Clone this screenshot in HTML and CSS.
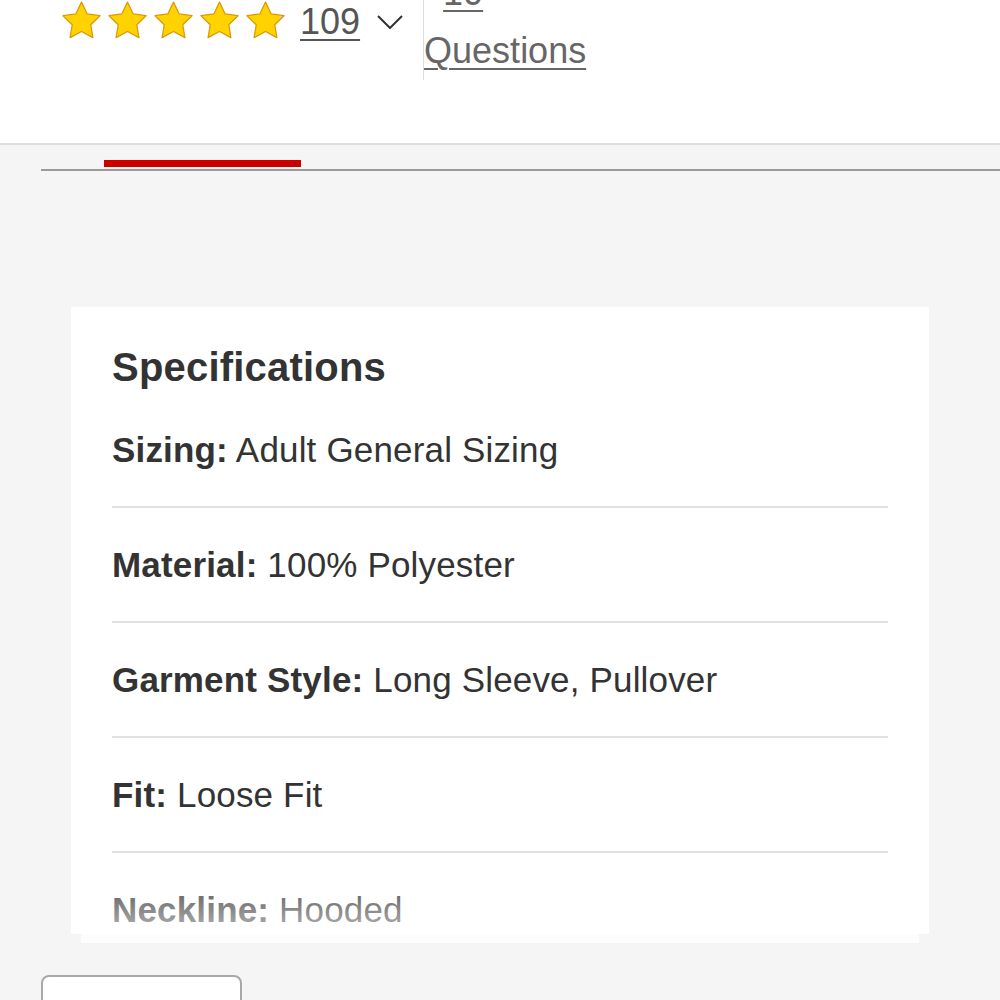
FILE: index.html
```html
<!DOCTYPE html>
<html lang="en">
<head>
<meta charset="utf-8">
<title>Specifications</title>
<link rel="stylesheet" href="styles.css">
</head>
<body>
<header class="header">
  <div class="rating">
    <div class="stars">
      <svg class="star" viewBox="0 0 24 23"><path d="M12 1.2l3.2 6.6 7.2 1-5.2 5.1 1.2 7.2L12 17.7l-6.4 3.4 1.2-7.2L1.6 8.8l7.2-1z"/></svg>
      <svg class="star" viewBox="0 0 24 23"><path d="M12 1.2l3.2 6.6 7.2 1-5.2 5.1 1.2 7.2L12 17.7l-6.4 3.4 1.2-7.2L1.6 8.8l7.2-1z"/></svg>
      <svg class="star" viewBox="0 0 24 23"><path d="M12 1.2l3.2 6.6 7.2 1-5.2 5.1 1.2 7.2L12 17.7l-6.4 3.4 1.2-7.2L1.6 8.8l7.2-1z"/></svg>
      <svg class="star" viewBox="0 0 24 23"><path d="M12 1.2l3.2 6.6 7.2 1-5.2 5.1 1.2 7.2L12 17.7l-6.4 3.4 1.2-7.2L1.6 8.8l7.2-1z"/></svg>
      <svg class="star star-part" viewBox="0 0 24 23"><defs><linearGradient id="pg" x1="0" x2="1" y1="0" y2="0"><stop offset="0.9" stop-color="#ffd200"/><stop offset="0.9" stop-color="#c8c8c8"/></linearGradient></defs><path fill="url(#pg)" d="M12 1.2l3.2 6.6 7.2 1-5.2 5.1 1.2 7.2L12 17.7l-6.4 3.4 1.2-7.2L1.6 8.8l7.2-1z"/></svg>
    </div>
    <a class="count" href="#reviews">109</a>
    <svg class="chevron" viewBox="0 0 26 14"><path d="M1 1l12 12L25 1"/></svg>
  </div>
  <div class="qa">
    <a class="qa-num" href="#qa">10</a>
    <a class="qa-label" href="#qa">Questions</a>
  </div>
</header>

<nav class="tabs">
  <div class="tab active"></div>
</nav>

<main class="content">
  <section class="card">
    <h2 class="card-title">Specifications</h2>
    <div class="row"><b>Sizing:</b> Adult General Sizing</div>
    <div class="row"><b>Material:</b> 100% Polyester</div>
    <div class="row"><b>Garment Style:</b> Long Sleeve, Pullover</div>
    <div class="row"><b>Fit:</b> Loose Fit</div>
    <div class="row"><b>Neckline:</b> Hooded</div>
    <div class="fade"></div>
  </section>
  <div class="card-stack"></div>
  <button class="more" type="button"></button>
</main>
</body>
</html>
```

FILE: styles.css
```css
html, body {
  margin: 0;
  padding: 0;
}

body {
  background: #f5f5f5;
  font-family: "Liberation Sans", Arial, Helvetica, sans-serif;
  color: #333;
  overflow: hidden;
  height: 1000px;
}

.header {
  background: #fff;
  height: 143px;
  border-bottom: 2px solid #dddddd;
  display: flex;
  align-items: flex-start;
  padding-left: 60px;
}

.rating {
  display: flex;
  align-items: flex-start;
}

.stars {
  display: flex;
  gap: 3px;
}

.star {
  width: 43px;
  height: 41px;
  display: block;
}

.star path {
  fill: #ffd200;
  stroke: #d99a06;
  stroke-width: 0.7;
  stroke-linejoin: round;
}

.star-part path {
  fill: url(#pg);
}

.count {
  margin-left: 13px;
  margin-top: 1px;
  font-size: 36px;
  line-height: 42px;
  color: #555;
  text-decoration: underline;
  text-decoration-thickness: 2px;
  text-underline-offset: 5px;
}

.chevron {
  width: 26px;
  height: 14px;
  margin-left: 17px;
  margin-top: 15px;
  display: block;
}

.chevron path {
  fill: none;
  stroke: #333;
  stroke-width: 2;
}

.qa {
  margin-left: 20px;
  margin-top: -28px;
  border-left: 1px solid #dcdcdc;
  padding-bottom: 8px;
  display: flex;
  flex-direction: column;
  gap: 16px;
}

.qa a {
  font-size: 36px;
  line-height: 42px;
  color: #666;
  text-decoration: underline;
  text-decoration-thickness: 2px;
  text-underline-offset: 5px;
}

.qa-num {
  padding-left: 19px;
}

.tabs {
  margin-left: 41px;
  padding-top: 15px;
  border-bottom: 2px solid #9a9a9a;
  display: flex;
}

.tab {
  width: 197px;
  height: 7px;
  margin-left: 63px;
  margin-bottom: 2px;
}

.tab.active {
  background: #cc0000;
}

.content {
  padding: 136px 41px 0;
}

.card {
  position: relative;
  margin: 0 30px;
  background: #fff;
  height: 627px;
  box-sizing: border-box;
  padding: 36px 41px 0;
  overflow: hidden;
}

.card-title {
  margin: 0 0 2px;
  font-size: 40px;
  line-height: 48px;
  font-weight: bold;
  letter-spacing: 0.2px;
  color: #333;
}

.row {
  font-size: 35px;
  line-height: 42px;
  letter-spacing: 0.17px;
  padding: 36px 0 35px;
  border-bottom: 2px solid #e1e1e1;
  color: #333;
  white-space: nowrap;
}

.row b {
  font-weight: bold;
}

.fade {
  position: absolute;
  left: 0;
  right: 0;
  bottom: 0;
  height: 70px;
  background: linear-gradient(to bottom, rgba(255, 255, 255, 0) 0%, rgba(255, 255, 255, 0.65) 100%);
}

.card-stack {
  margin: 0 40px;
  height: 9px;
  background: #fdfdfd;
}

.more {
  display: block;
  margin-top: 32px;
  width: 201px;
  height: 60px;
  background: #fff;
  border: 2px solid #a8a8a8;
  border-radius: 8px;
  padding: 0;
}
```
